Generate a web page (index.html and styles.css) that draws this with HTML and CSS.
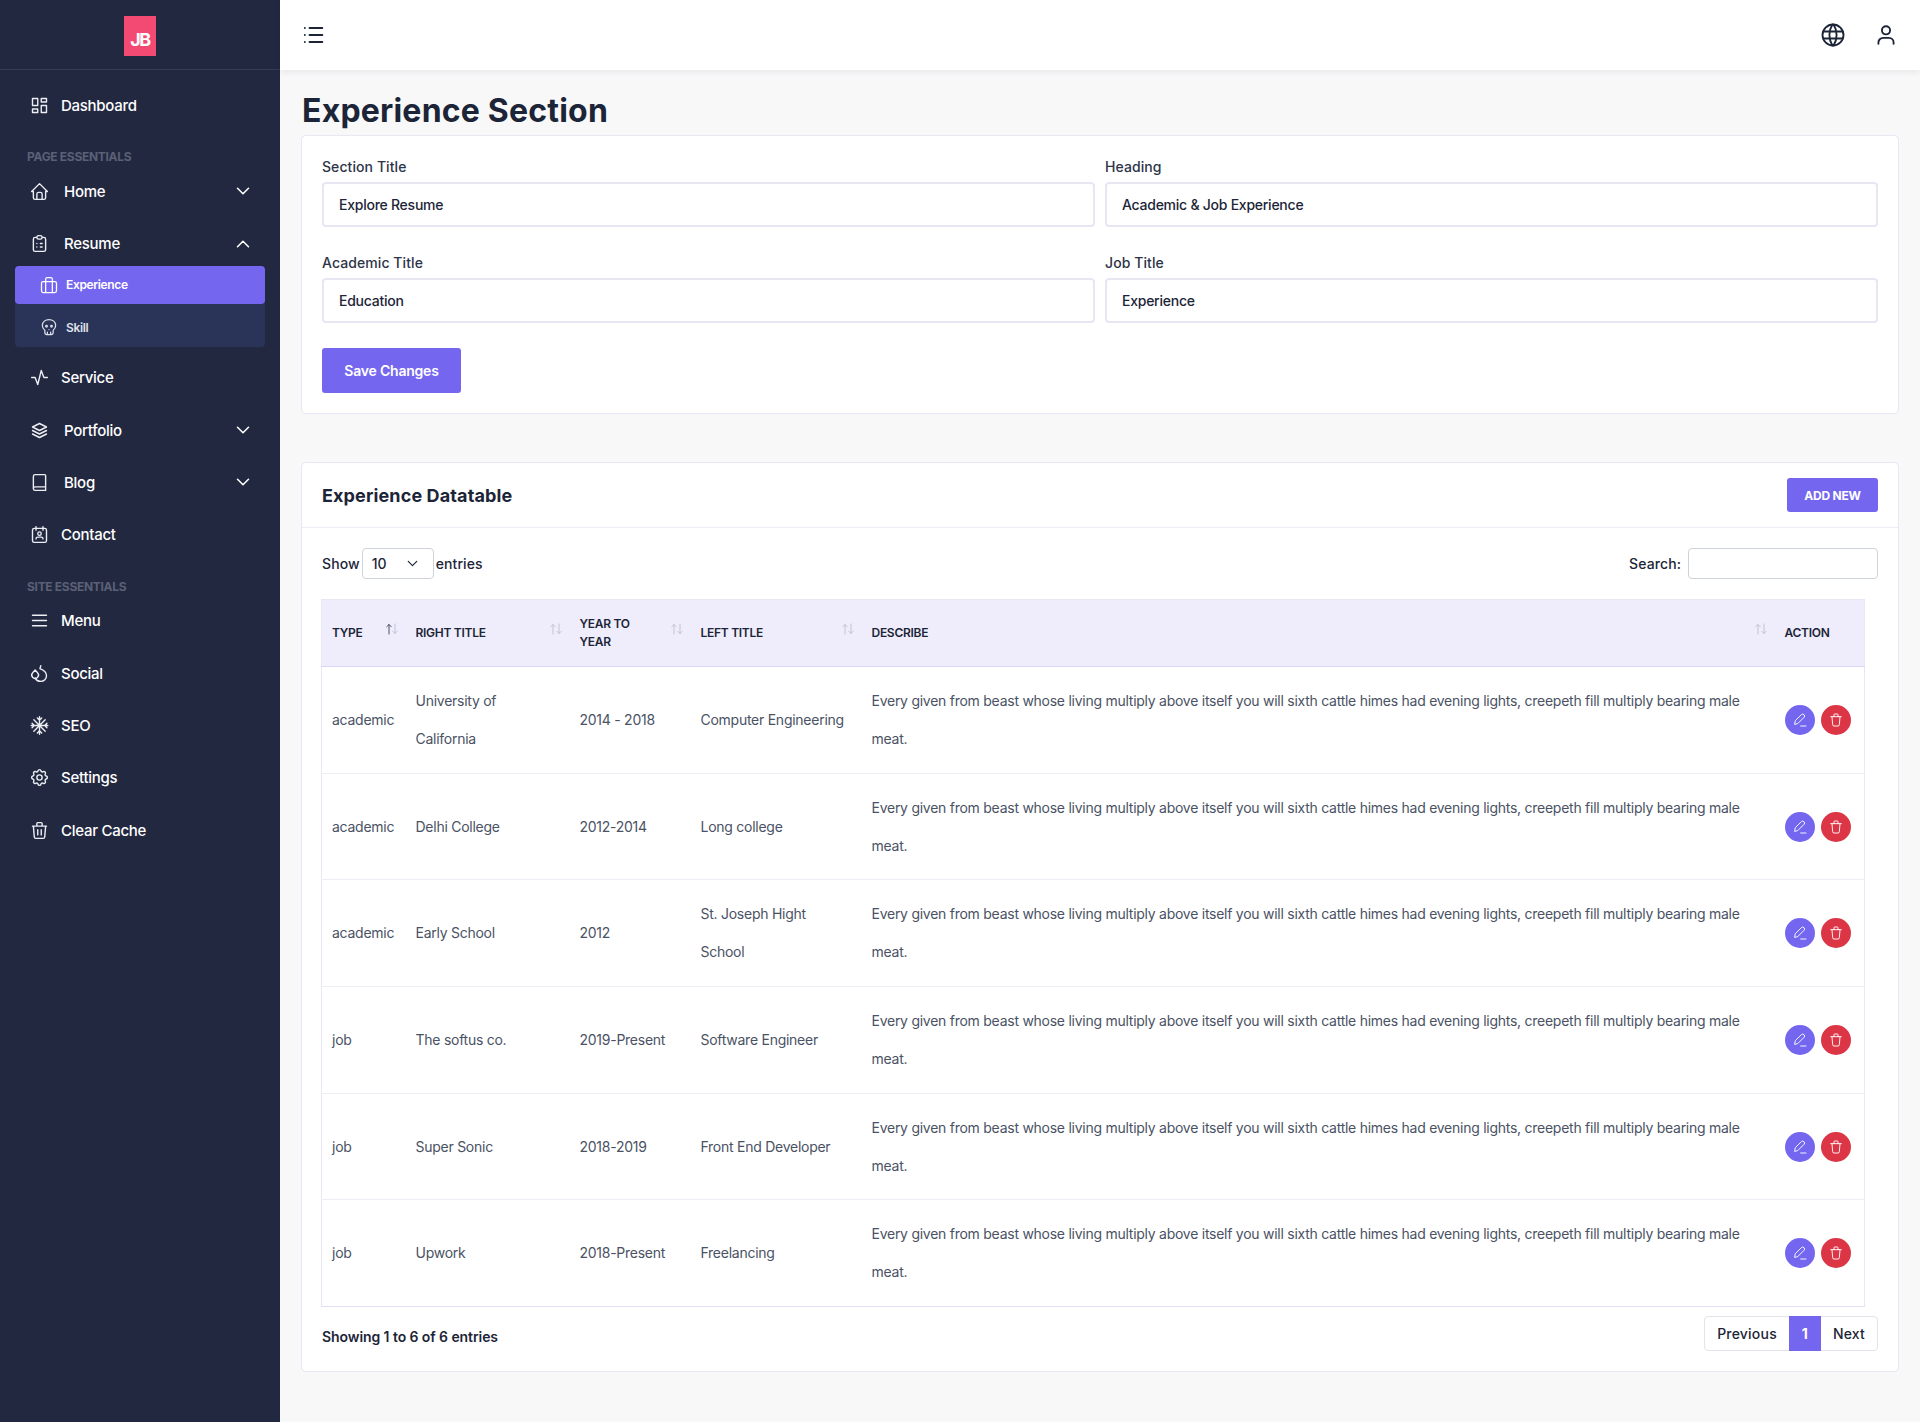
FILE: index.html
```html
<!DOCTYPE html>
<html lang="en">
<head>
<meta charset="utf-8">
<title>Experience Section</title>
<link rel="stylesheet" href="styles.css">
</head>
<body>
<svg class="defs" width="0" height="0" aria-hidden="true">
  <symbol id="i-dash" viewBox="0 0 24 24"><path d="M4 4h6v8h-6z M4 16h6v4h-6z M14 12h6v8h-6z M14 4h6v4h-6z"/></symbol>
  <symbol id="i-home" viewBox="0 0 24 24"><path d="M5 12h-2l9-9l9 9h-2 M5 12v7a2 2 0 0 0 2 2h10a2 2 0 0 0 2-2v-7 M9 21v-6a2 2 0 0 1 2-2h2a2 2 0 0 1 2 2v6"/></symbol>
  <symbol id="i-clip" viewBox="0 0 24 24"><path d="M9 5h-2a2 2 0 0 0-2 2v12a2 2 0 0 0 2 2h10a2 2 0 0 0 2-2v-12a2 2 0 0 0-2-2h-2 M9 5a2 2 0 0 1 2-2h2a2 2 0 0 1 2 2a2 2 0 0 1-2 2h-2a2 2 0 0 1-2-2 M9 12h.01 M13 12h2 M9 16h.01 M13 16h2"/></symbol>
  <symbol id="i-case" viewBox="0 0 24 24"><path d="M5 8h14a2 2 0 0 1 2 2v9a2 2 0 0 1-2 2h-14a2 2 0 0 1-2-2v-9a2 2 0 0 1 2-2z M8 8v13 M16 8v13 M8 8v-3a2 2 0 0 1 2-2h4a2 2 0 0 1 2 2v3"/></symbol>
  <symbol id="i-skull" viewBox="0 0 24 24"><path d="M12 3c4.400 0 8 2.800 8 7c0 2.600-1.200 4.800-3 6v3a2 2 0 0 1-2 2h-6a2 2 0 0 1-2-2v-3c-1.800-1.200-3-3.400-3-6c0-4.200 3.600-7 8-7z M12 15h.01 M10 21v-3 M14 21v-3"/><circle cx="9" cy="11" r="1"/><circle cx="15" cy="11" r="1"/></symbol>
  <symbol id="i-activity" viewBox="0 0 24 24"><path d="M3 12h4l3 8l4-16l3 8h4"/></symbol>
  <symbol id="i-stack" viewBox="0 0 24 24"><path d="M12 4l-8 4l8 4l8-4l-8-4 M4 12l8 4l8-4 M4 16l8 4l8-4"/></symbol>
  <symbol id="i-book" viewBox="0 0 24 24"><path d="M7 3h11a1 1 0 0 1 1 1v17h-12a2 2 0 0 1-2-2v-14a2 2 0 0 1 2-2z M5 19a2 2 0 0 1 2-2h12"/></symbol>
  <symbol id="i-contact" viewBox="0 0 24 24"><path d="M6 5h12a2 2 0 0 1 2 2v12a2 2 0 0 1-2 2h-12a2 2 0 0 1-2-2v-12a2 2 0 0 1 2-2z M8 3v4 M16 3v4 M8 17a2 2 0 0 1 2-2h4a2 2 0 0 1 2 2"/><circle cx="12" cy="11" r="2"/></symbol>
  <symbol id="i-menu" viewBox="0 0 24 24"><path d="M4 6h16 M4 12h16 M4 18h16"/></symbol>
  <symbol id="i-drop" viewBox="0 0 24 24"><path d="M13.500 3l-1 3.500c2.500 1 7.500 3.500 7.500 8a6.500 6.500 0 0 1-6.500 6.500c-3 0-5.500-1.500-6.500-4"/><path d="M7 8l2.800 3.200a3.800 3.800 0 1 1-5.600 0z"/></symbol>
  <symbol id="i-snow" viewBox="0 0 24 24"><path d="M12 2v20 M2.500 12h19 M5.500 5.500l13 13 M18.500 5.500l-13 13 M9.500 3.500l2.500 2.500l2.500-2.500 M9.500 20.500l2.500-2.500l2.500 2.500 M3.500 9.500l2.500 2.500l-2.500 2.500 M20.500 9.500l-2.500 2.500l2.500 2.500"/></symbol>
  <symbol id="i-gear" viewBox="0 0 24 24"><path d="M10.325 4.317c.426-1.756 2.924-1.756 3.350 0a1.724 1.724 0 0 0 2.573 1.066c1.543-.94 3.310 .826 2.370 2.370a1.724 1.724 0 0 0 1.065 2.572c1.756 .426 1.756 2.924 0 3.350a1.724 1.724 0 0 0-1.066 2.573c.94 1.543-.826 3.310-2.370 2.370a1.724 1.724 0 0 0-2.572 1.065c-.426 1.756-2.924 1.756-3.350 0a1.724 1.724 0 0 0-2.573-1.066c-1.543 .94-3.310-.826-2.370-2.370a1.724 1.724 0 0 0-1.065-2.572c-1.756-.426-1.756-2.924 0-3.350a1.724 1.724 0 0 0 1.066-2.573c-.94-1.543 .826-3.310 2.370-2.370c1 .608 2.296 .07 2.572-1.065z"/><circle cx="12" cy="12" r="3"/></symbol>
  <symbol id="i-trash" viewBox="0 0 24 24"><path d="M4 7h16 M10 11v6 M14 11v6 M5 7l1 12a2 2 0 0 0 2 2h8a2 2 0 0 0 2-2l1-12 M9 7v-3a1 1 0 0 1 1-1h4a1 1 0 0 1 1 1v3"/></symbol>
  <symbol id="i-trash2" viewBox="0 0 24 24"><path d="M4 7h16 M6 7l1 12a2 2 0 0 0 2 2h6a2 2 0 0 0 2-2l1-12 M9 7v-3a1 1 0 0 1 1-1h4a1 1 0 0 1 1 1v3"/></symbol>
  <symbol id="i-pen" viewBox="0 0 24 24"><path d="M4 18l1-5l9-9a2.500 2.500 0 0 1 4 4l-9 9z M13 21h8"/></symbol>
  <symbol id="i-down" viewBox="0 0 24 24"><path d="M6 9l6 6l6-6"/></symbol>
  <symbol id="i-up" viewBox="0 0 24 24"><path d="M6 15l6-6l6 6"/></symbol>
  <symbol id="i-list" viewBox="0 0 24 24"><path d="M9 6h11 M9 12h11 M9 18h11 M5 6v.01 M5 12v.01 M5 18v.01"/></symbol>
  <symbol id="i-world" viewBox="0 0 24 24"><circle cx="12" cy="12" r="9"/><path d="M3.600 9h16.800 M3.600 15h16.800 M11.500 3a17 17 0 0 0 0 18 M12.500 3a17 17 0 0 1 0 18"/></symbol>
  <symbol id="i-user" viewBox="0 0 24 24"><circle cx="12" cy="8" r="3.500"/><path d="M5.500 19.500v-1a4 4 0 0 1 4-4h5a4 4 0 0 1 4 4v1"/></symbol>
  <symbol id="i-sort" viewBox="0 0 12 12"><path class="sort-up" d="M3 11V1.500 M.8 3.700L3 1.500l2.200 2.200"/><path class="sort-down" d="M9 1v9.500 M6.800 8.300L9 10.500l2.200-2.200"/></symbol>
</svg>

<div class="app">
  <aside class="sidebar">
    <div class="brand"><div class="logo">JB</div></div>
    <nav class="nav">
      <a class="item"><svg class="ico"><use href="#i-dash"/></svg><span>Dashboard</span></a>
      <div class="nav-label">PAGE ESSENTIALS</div>
      <a class="item sub"><svg class="ico"><use href="#i-home"/></svg><span>Home</span><svg class="chev"><use href="#i-down"/></svg></a>
      <a class="item sub open"><svg class="ico"><use href="#i-clip"/></svg><span>Resume</span><svg class="chev"><use href="#i-up"/></svg></a>
      <div class="submenu">
        <a class="subitem active"><svg class="sico"><use href="#i-case"/></svg><span>Experience</span></a>
        <a class="subitem skill"><svg class="sico"><use href="#i-skull"/></svg><span>Skill</span></a>
      </div>
      <a class="item"><svg class="ico"><use href="#i-activity"/></svg><span>Service</span></a>
      <a class="item sub"><svg class="ico"><use href="#i-stack"/></svg><span>Portfolio</span><svg class="chev"><use href="#i-down"/></svg></a>
      <a class="item sub"><svg class="ico"><use href="#i-book"/></svg><span>Blog</span><svg class="chev"><use href="#i-down"/></svg></a>
      <a class="item"><svg class="ico"><use href="#i-contact"/></svg><span>Contact</span></a>
      <div class="nav-label">SITE ESSENTIALS</div>
      <a class="item"><svg class="ico"><use href="#i-menu"/></svg><span>Menu</span></a>
      <a class="item"><svg class="ico"><use href="#i-drop"/></svg><span>Social</span></a>
      <a class="item"><svg class="ico"><use href="#i-snow"/></svg><span>SEO</span></a>
      <a class="item"><svg class="ico"><use href="#i-gear"/></svg><span>Settings</span></a>
      <a class="item"><svg class="ico"><use href="#i-trash"/></svg><span>Clear Cache</span></a>
    </nav>
  </aside>

  <div class="main">
    <header class="topbar">
      <svg class="top-ico"><use href="#i-list"/></svg>
      <div class="top-right">
        <svg class="top-ico"><use href="#i-world"/></svg>
        <svg class="top-ico"><use href="#i-user"/></svg>
      </div>
    </header>
    <main class="content">
      <h1 class="page-title">Experience Section</h1>
      <section class="card form-card">
        <form class="form-grid">
          <label class="field"><span>Section Title</span><input type="text" value="Explore Resume"></label>
          <label class="field"><span>Heading</span><input type="text" value="Academic &amp; Job Experience"></label>
          <label class="field"><span>Academic Title</span><input type="text" value="Education"></label>
          <label class="field"><span>Job Title</span><input type="text" value="Experience"></label>
        </form>
        <button class="btn-save" type="button">Save Changes</button>
      </section>

      <section class="card table-card">
        <div class="card-head">
          <h2>Experience Datatable</h2>
          <button class="btn-add" type="button">ADD NEW</button>
        </div>
        <div class="card-body">
          <div class="dt-top">
            <div class="dt-length">Show
              <span class="select-wrap"><select><option>10</option></select><svg class="sel-chev"><use href="#i-down"/></svg></span>
              entries</div>
            <label class="dt-search">Search:<input type="text"></label>
          </div>
          <table class="dt">
            <colgroup><col class="c1"><col class="c2"><col class="c3"><col class="c4"><col class="c5"><col class="c6"></colgroup>
            <thead>
              <tr>
                <th>TYPE<svg class="sort first"><use href="#i-sort"/></svg></th>
                <th>RIGHT TITLE<svg class="sort"><use href="#i-sort"/></svg></th>
                <th>YEAR TO<br>YEAR<svg class="sort"><use href="#i-sort"/></svg></th>
                <th>LEFT TITLE<svg class="sort"><use href="#i-sort"/></svg></th>
                <th>DESCRIBE<svg class="sort"><use href="#i-sort"/></svg></th>
                <th>ACTION</th>
              </tr>
            </thead>
            <tbody>
              <tr><td>academic</td><td>University of<br>California</td><td>2014 - 2018</td><td>Computer Engineering</td><td>Every given from beast whose living multiply above itself you will sixth cattle himes had evening lights, creepeth fill multiply bearing male meat.</td><td><div class="acts"><a class="act edit"><svg><use href="#i-pen"/></svg></a><a class="act del"><svg><use href="#i-trash2"/></svg></a></div></td></tr>
              <tr><td>academic</td><td>Delhi College</td><td>2012-2014</td><td>Long college</td><td>Every given from beast whose living multiply above itself you will sixth cattle himes had evening lights, creepeth fill multiply bearing male meat.</td><td><div class="acts"><a class="act edit"><svg><use href="#i-pen"/></svg></a><a class="act del"><svg><use href="#i-trash2"/></svg></a></div></td></tr>
              <tr><td>academic</td><td>Early School</td><td>2012</td><td>St. Joseph Hight<br>School</td><td>Every given from beast whose living multiply above itself you will sixth cattle himes had evening lights, creepeth fill multiply bearing male meat.</td><td><div class="acts"><a class="act edit"><svg><use href="#i-pen"/></svg></a><a class="act del"><svg><use href="#i-trash2"/></svg></a></div></td></tr>
              <tr><td>job</td><td>The softus co.</td><td>2019-Present</td><td>Software Engineer</td><td>Every given from beast whose living multiply above itself you will sixth cattle himes had evening lights, creepeth fill multiply bearing male meat.</td><td><div class="acts"><a class="act edit"><svg><use href="#i-pen"/></svg></a><a class="act del"><svg><use href="#i-trash2"/></svg></a></div></td></tr>
              <tr><td>job</td><td>Super Sonic</td><td>2018-2019</td><td>Front End Developer</td><td>Every given from beast whose living multiply above itself you will sixth cattle himes had evening lights, creepeth fill multiply bearing male meat.</td><td><div class="acts"><a class="act edit"><svg><use href="#i-pen"/></svg></a><a class="act del"><svg><use href="#i-trash2"/></svg></a></div></td></tr>
              <tr><td>job</td><td>Upwork</td><td>2018-Present</td><td>Freelancing</td><td>Every given from beast whose living multiply above itself you will sixth cattle himes had evening lights, creepeth fill multiply bearing male meat.</td><td><div class="acts"><a class="act edit"><svg><use href="#i-pen"/></svg></a><a class="act del"><svg><use href="#i-trash2"/></svg></a></div></td></tr>
            </tbody>
          </table>
          <div class="dt-foot">
            <div class="dt-info">Showing 1 to 6 of 6 entries</div>
            <div class="pager"><a>Previous</a><a class="cur">1</a><a>Next</a></div>
          </div>
        </div>
      </section>
    </main>
  </div>
</div>
</body>
</html>
```

FILE: styles.css
```css
* { box-sizing: border-box; }
html, body { margin: 0; padding: 0; }
body {
  font-family: "Inter", "Noto Sans", sans-serif;
  font-size: 14px;
  color: #1c2537;
  background: #f8f8f9;
  letter-spacing: -0.35px;
}
.defs { position: absolute; }
svg { fill: none; stroke: currentColor; stroke-linecap: round; stroke-linejoin: round; stroke-width: 1.7; }

.app { display: flex; min-height: 1422px; }

/* sidebar */
.sidebar { width: 280px; flex: none; background: #222840; color: #fff; }
.brand { height: 70px; display: flex; justify-content: center; padding-top: 16px; border-bottom: 1px solid #363c53; }
.logo { width: 32px; height: 40px; background: #f34a74; color: #fff; font-weight: 700; font-size: 18px; letter-spacing: -1.5px; display: flex; align-items: center; justify-content: center; padding-top: 7px; }
.nav { display: flex; flex-direction: column; padding-top: 9px; }
.item { height: 52.3px; padding: 0 30px 0 29px; display: flex; align-items: center; gap: 11px; font-size: 15px; font-weight: 500; letter-spacing: -0.27px; color: #fff; flex: none; }
.item.sub { gap: 14px; }
.item.open { height: 48px; padding-top: 4px; }
.ico { width: 21px; height: 21px; flex: none; color: #eceef3; stroke-width: 1.6; }
.chev { width: 22px; height: 22px; margin-left: auto; margin-right: -4px; color: #fff; stroke-width: 1.7; }
.nav-label { height: 34px; padding: 16px 27px 0; font-size: 12px; line-height: 19px; font-weight: 700; color: #5a6076; letter-spacing: -0.3px; }
.submenu { margin: 0 15px 5px; background: #2a3358; border-radius: 4px; display: flex; flex-direction: column; }
.subitem { height: 38px; padding: 0 24px; display: flex; align-items: center; gap: 7px; font-size: 12px; font-weight: 600; color: #dfe1ea; }
.subitem.skill { height: 43px; padding-top: 4px; }
.subitem.active { background: #7566f0; color: #fff; border-radius: 4px; }
.sico { width: 20px; height: 20px; flex: none; stroke-width: 1.5; }

/* main */
.main { flex: 1; min-width: 0; display: flex; flex-direction: column; }
.topbar { height: 70px; background: #fff; box-shadow: 0 2px 6px rgba(30, 40, 70, .08); padding: 0 20px 0 19px; display: flex; align-items: center; justify-content: space-between; position: relative; }
.top-ico { width: 28px; height: 28px; color: #1c2537; stroke-width: 1.6; }
.top-right { display: flex; gap: 25px; align-items: center; }
.content { padding: 20px 21px 50px; }
.page-title { margin: 0; font-size: 32px; line-height: 39px; height: 45px; padding: 1px 0 0 1px; font-weight: 700; color: #1c2537; letter-spacing: 0.2px; }
.card { background: #fff; border: 1px solid #e9e7f6; border-radius: 5px; }
.form-card { padding: 20px 20px 20px; height: 279px; }
.form-grid { display: grid; grid-template-columns: 1fr 1fr; column-gap: 10px; row-gap: 25px; }
.field { display: flex; flex-direction: column; gap: 5px; font-size: 14px; font-weight: 500; color: #2d3448; line-height: 21px; letter-spacing: 0.08px; }
.field input { height: 45px; border: 2px solid #e6e7f3; border-radius: 4px; padding: 0 15px; font: inherit; font-weight: 500; color: #1c2537; background: #fff; letter-spacing: -0.25px; outline: none; width: 100%; }
.btn-save { margin-top: 25px; display: block; width: 139px; height: 45px; background: #7566f0; color: #fff; border: 0; border-radius: 3px; font: inherit; font-weight: 600; letter-spacing: -0.22px; }

.table-card { margin-top: 48px; height: 910px; }
.card-head { height: 65px; padding: 0 20px; border-bottom: 1px solid #eeedf5; display: flex; align-items: center; justify-content: space-between; }
.card-head h2 { margin: 0; font-size: 18px; font-weight: 700; color: #1c2537; letter-spacing: 0.12px; }
.btn-add { width: 91px; height: 34px; background: #7566f0; color: #fff; border: 0; border-radius: 3px; font: inherit; font-size: 12px; font-weight: 700; letter-spacing: -0.25px; }
.card-body { padding: 20px 20px 0 20px; }
.dt-top { display: flex; justify-content: space-between; align-items: center; height: 31px; font-weight: 500; color: #1c2537; letter-spacing: 0.1px; }
.dt-length { display: flex; align-items: center; gap: 2px; }
.select-wrap { position: relative; display: block; width: 72px; height: 31px; }
.select-wrap select { width: 100%; height: 100%; appearance: none; background: #fff; border: 1px solid #ced2db; border-radius: 4px; padding: 0 9px; font: inherit; color: #1c2537; }
.sel-chev { position: absolute; right: 13px; top: 7px; width: 17px; height: 17px; pointer-events: none; }
.dt-search { display: flex; align-items: center; gap: 7px; }
.dt-search input { width: 190px; height: 31px; border: 1px solid #ced2db; border-radius: 4px; background: #fff; outline: none; }

.dt { width: 1543px; table-layout: fixed; border-collapse: collapse; margin: 20px 0 0 -1px; border: 1px solid #e9e7f6; color: #4a5264; }
.c1 { width: 84px; } .c2 { width: 164px; } .c3 { width: 121px; } .c4 { width: 171px; } .c5 { width: 913px; } .c6 { width: 90px; }
.dt th { position: relative; height: 67px; background: #efedfb; padding: 0 25px 0 10px; text-align: left; font-size: 12px; line-height: 18px; font-weight: 600; color: #1c2537; border-bottom: 1px solid #d9d5f7; letter-spacing: -0.28px; }
.dt td { padding: 15px 10px; font-size: 14px; line-height: 37.85px; font-weight: 400; border-bottom: 1px solid #eeedf5; vertical-align: middle; letter-spacing: -0.26px; }
.dt tbody tr:last-child td { border-bottom: 1px solid #e2e0f3; }
.sort { position: absolute; right: 8px; top: 23px; width: 12px; height: 12px; color: #c3c4ce; stroke-width: 1; }
.sort.first { --up-color: #4a5264; }
.sort-up { stroke: var(--up-color, currentColor); }
.acts { display: flex; gap: 6px; align-items: center; }
.act { width: 30px; height: 30px; border-radius: 50%; display: flex; align-items: center; justify-content: center; color: #fff; flex: none; }
.act svg { width: 16px; height: 16px; stroke-width: 1.4; }
.edit { background: #7566f0; }
.del { background: #dc3545; }

.dt-foot { display: flex; justify-content: space-between; align-items: center; margin-top: 8px; height: 36px; }
.dt-info { font-weight: 600; color: #1c2537; padding-top: 7px; letter-spacing: -0.08px; }
.pager { display: flex; height: 35px; border: 1px solid #e3e4e9; border-radius: 4px; background: #fff; font-weight: 500; color: #1c2537; letter-spacing: 0.2px; }
.pager a { display: flex; align-items: center; padding: 0 12px; }
.pager .cur { background: #7566f0; color: #fff; font-weight: 700; margin: -1px 0; width: 32px; justify-content: center; padding: 0; }
```
